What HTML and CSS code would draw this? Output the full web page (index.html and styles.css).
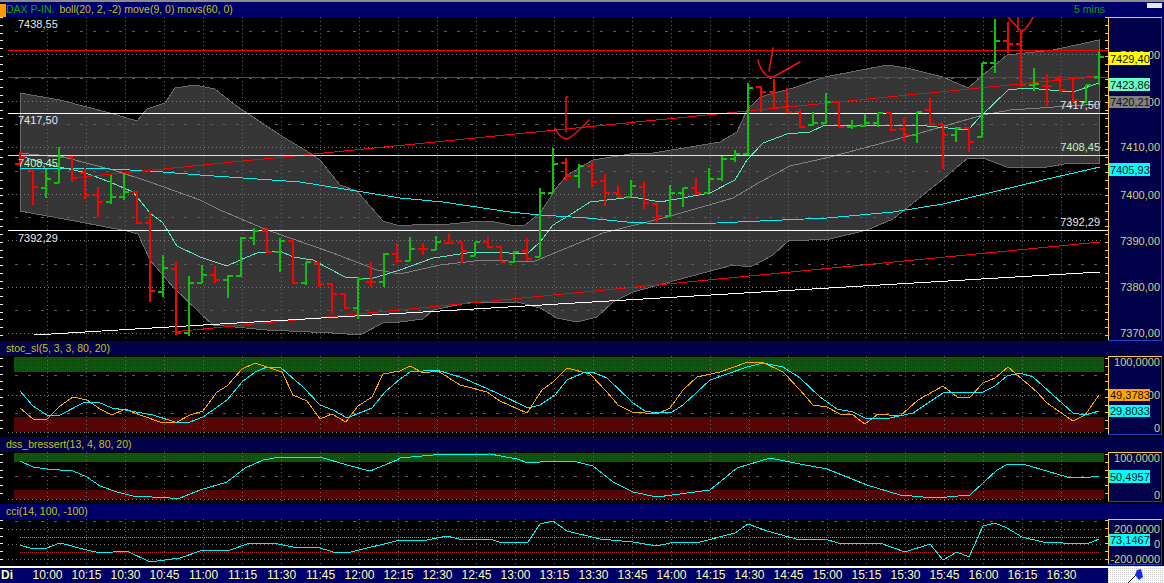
FILE: index.html
```html
<!DOCTYPE html>
<html lang="de">
<head>
<meta charset="utf-8">
<title>DAX P-IN. 5 mins</title>
<link rel="stylesheet" href="styles.css">
</head>
<body>
<svg class="defs" width="0" height="0" aria-hidden="true">
  <defs>
    <pattern id="navy" width="2" height="2" patternUnits="userSpaceOnUse"><rect width="2" height="2" fill="#00006c"/><rect width="1" height="1" fill="#000048"/><rect x="1" y="1" width="1" height="1" fill="#000048"/></pattern>
    <pattern id="green" width="2" height="2" patternUnits="userSpaceOnUse"><rect width="2" height="2" fill="#075e07"/><rect width="1" height="1" fill="#044804"/></pattern>
    <pattern id="red" width="2" height="2" patternUnits="userSpaceOnUse"><rect width="2" height="2" fill="#700000"/><rect width="1" height="1" fill="#500000"/><rect x="1" y="1" width="1" height="1" fill="#500000"/></pattern>
    <pattern id="gray" width="4" height="4" patternUnits="userSpaceOnUse"><rect width="4" height="4" fill="#383638"/><rect width="1" height="1" fill="#323832"/><rect x="2" y="1" width="1" height="1" fill="#383030"/><rect x="1" y="3" width="1" height="1" fill="#303030"/><rect x="3" y="2" width="1" height="1" fill="#303038"/></pattern>
    <pattern id="paper" width="2" height="2" patternUnits="userSpaceOnUse"><rect width="2" height="2" fill="#fff"/><rect width="1" height="1" fill="#ccc"/></pattern>
  </defs>
</svg>
<div class="app">
  <div class="topbar"></div>

  <header class="head">
    <span class="flag"></span><span class="sym">DAX P-IN.</span><span class="ind">boll(20, 2, -2) move(9, 0) movs(60, 0)</span>
    <span class="period">5 mins</span><span class="winbtn"></span>
  </header>
  <section class="row row-main">
    <svg class="plot" width="1108" height="324" viewBox="0 17 1108 324">
      <polygon fill="url(#gray)" class="bandedge" points="20,93 60,100 110,113 137,121 147,109 165,103 175,88 195,85 215,89 235,105 280,135 310,153 320,160 340,185 357,191 383,221 400,226 425,224 440,225 470,222 490,221 510,225 525,225 540,213 557,187 567,175 593,160 630,154 653,153 690,147 720,142 737,132 747,110 760,97 793,88 825,77 887,65 907,68 943,77 968,88 983,75 1007,55 1053,50 1099,40 1099,163 1070,163 1047,167 1007,167 983,158 968,158 943,179 893,219 867,230 830,239 788,241 773,255 760,262 750,267 733,265 677,280 633,292 613,302 597,317 577,322 557,318 540,308 517,302 467,303 433,310 423,319 400,322 383,323 360,335 333,333 267,330 213,325 200,313 173,287 150,260 138,234 127,231 80,222 20,211"/>
      <path class="grid-dot" d="M8 54H1104M8 101H1104M8 147H1104M8 194H1104M8 240H1104M8 287H1104M8 333H1104"/>
      <path class="grid-dash" d="M15 31H1104M15 78H1104M15 124H1104M15 171H1104M15 217H1104M15 264H1104M15 310H1104"/>
      <path class="grid-v" d="M47 17V341M86 17V341M125 17V341M164 17V341M203 17V341M242 17V341M281 17V341M320 17V341M359 17V341M398 17V341M437 17V341M476 17V341M515 17V341M554 17V341M593 17V341M632 17V341M671 17V341M710 17V341M749 17V341M788 17V341M827 17V341M866 17V341M905 17V341M944 17V341M983 17V341M1022 17V341M1061 17V341"/>
      <path class="ticks-l" d="M1.5 17V341"/>
      <path class="ticks-r" d="M1106.5 17V341"/>

      <polyline class="ln ln-gray" points="20,153 67,158 113,170 150,182 200,200 220,210 267,230 333,253 377,270 400,274 440,265 483,260 533,262 557,252 603,233 667,217 733,198 760,182 790,166 830,157 920,133 983,115 1010,110 1099,104"/>
      <polyline class="ln ln-cyan" points="20,168 50,168 110,169 150,171 200,175 300,182 400,198 443,202 510,212 540,215 587,218 627,222 667,224 717,223 760,221 827,218 893,212 943,204 993,192 1043,180 1100,167"/>
      <polyline class="ln ln-teal" points="20,156 50,165 83,172 110,182 133,192 150,213 163,223 177,246 200,257 227,266 240,260 257,253 280,251 293,257 313,260 345,277 370,279 400,270 433,258 467,253 490,252 527,254 540,242 553,225 573,213 590,202 633,197 660,202 710,193 735,180 747,160 763,143 787,134 810,132 825,125 893,125 927,126 968,130 980,117 1008,90 1027,88 1073,92 1099,83"/>

      <path class="ln-red" d="M72 178L1100 76M172 332L1100 242"/>
      <path class="ln-white" d="M34 335L1100 272"/>
      <path class="ln-red" d="M8 50.5H1108M8 77.5H1108"/>
      <path class="ln-white" d="M8 113.5H1108M8 230.5H1108"/>
      <path class="ln-pale" d="M8 155.5H1108"/>

      <path class="bar bar-red" d="M20 152V165M15 164H20M20 157H25M33 170V205M28 170H33M33 187H38M72 156V182M67 157H72M72 178H77M85 168V199M80 173H85M85 195H90M98 187V217M93 195H98M98 202H103M137 191V224M132 192H137M137 223H142M150 212V302M145 223H150M150 291H155M176 262V335M171 269H176M176 333H181M215 266V283M210 275H215M215 280H220M267 228V253M262 231H267M267 252H272M293 240V284M288 241H293M293 283H298M319 263V287M314 263H319M319 284H324M332 283V313M327 284H332M332 294H337M345 293V309M340 294H345M345 308H350M371 262V287M366 282H371M371 282H376M397 243V263M392 254H397M397 261H402M423 243V255M418 249H423M423 249H428M449 233V244M444 243H449M449 243H454M462 242V263M457 242H462M462 251H467M488 237V248M483 242H488M488 247H493M501 247V262M496 247H501M501 262H506M527 238V261M522 251H527M527 259H532M566 158V181M561 163H566M566 176H571M592 162V187M587 166H592M592 182H597M605 174V206M600 181H605M605 193H610M618 186V198M613 193H618M618 197H623M644 182V209M639 187H644M644 203H649M657 203V222M652 204H657M657 216H662M696 178V195M691 188H696M696 193H701M761 86V112M756 87H761M761 92H766M774 79V109M769 92H774M774 108H779M787 88V113M782 107H787M787 112H792M800 109V128M795 112H800M800 127H805M839 102V127M834 102H839M839 127H844M891 113V131M886 113H891M891 130H896M904 118V141M899 129H904M904 135H909M930 98V126M925 110H930M930 124H935M943 124V169M938 124H943M943 135H948M969 128V152M964 128H969M969 142H974M1008 22V53M1003 41H1008M1008 44H1013M1021 30V87M1016 44H1021M1021 85H1026M1047 74V106M1042 86H1047M1047 86H1052M1060 75V92M1055 79H1060M1060 90H1065M1073 78V102M1068 78H1073M1073 100H1078M1086 77H1097"/>
      <path class="bar bar-green" d="M46 169V198M41 188H46M46 179H51M59 147V183M54 183H59M59 157H64M111 175V204M106 202H111M111 197H116M124 173V200M119 197H124M124 192H129M163 255V297M158 292H163M163 268H168M189 276V336M184 333H189M189 283H194M202 265V283M197 283H202M202 275H207M228 275V298M223 280H228M228 276H233M241 237V277M236 276H241M241 238H246M254 228V245M249 238H254M254 231H259M280 238V272M275 252H280M280 241H285M306 262V285M301 283H306M306 262H311M358 279V319M353 308H358M358 279H363M384 253V287M379 282H384M384 254H389M410 237V261M405 261H410M410 249H415M436 236V250M431 250H436M436 242H441M475 242V256M470 256H475M475 242H480M514 251V263M509 262H514M514 252H519M540 188V257M535 257H540M540 193H545M553 148V193M548 193H553M553 164H558M579 164V188M574 176H579M579 166H584M631 180V197M626 197H631M631 186H636M670 185V217M665 216H670M670 193H675M683 188V207M678 193H683M683 188H688M709 168V193M704 193H709M709 179H714M722 156V181M717 179H722M722 159H727M735 150V162M730 159H735M735 154H740M748 83V155M743 154H748M748 88H753M813 112V126M808 125H813M813 123H818M826 93V124M821 123H826M826 102H831M852 120V129M847 127H852M852 126H857M865 114V127M860 126H865M865 123H870M878 113V127M873 123H878M878 113H883M917 112V143M912 135H917M917 112H922M956 127V142M951 135H956M956 128H961M982 63V137M977 137H982M982 63H987M995 19V73M990 63H995M995 41H1000M1034 68V91M1029 85H1034M1034 84H1039M1086 85V103M1081 102H1086M1086 85H1091M1099 51V85M1094 77H1099M1099 57H1104"/>

      <path class="pen" d="M568 97L566 97L566 132M555 128Q559 138 567 139Q573 137 589 120M773 48L769 71M758 60Q762 77 773 77L800 62M1018 3V30M1000 10Q1006 12 1008 17L1022 32Q1030 25 1035 13"/>

      <text class="lbl" x="18" y="28">7438,55</text>
      <text class="lbl" x="18" y="124">7417,50</text>
      <text class="lbl lbl-pale" x="18" y="167">7408,45</text>
      <text class="lbl" x="18" y="242">7392,29</text>
      <text class="lbl" x="1100" y="109" text-anchor="end">7417,50</text>
      <text class="lbl lbl-pale" x="1100" y="151" text-anchor="end">7408,45</text>
      <text class="lbl" x="1100" y="226" text-anchor="end">7392,29</text>
    </svg>
    <svg class="axis" width="56" height="324" viewBox="1108 17 56 324">
      <rect x="1108" y="17" width="56" height="323" fill="url(#navy)"/>
      <path class="ax-blue" d="M1161.5 17V340H1108"/>
      <path class="ax-gold" d="M1108 17.5H1162M1108.5 17V340"/>
      <text class="ax" x="1160" y="59" text-anchor="end">7430,00</text>
      <text class="ax" x="1160" y="106" text-anchor="end">7420,00</text>
      <text class="ax" x="1160" y="151" text-anchor="end">7410,00</text>
      <text class="ax" x="1160" y="199" text-anchor="end">7400,00</text>
      <text class="ax" x="1160" y="245" text-anchor="end">7390,00</text>
      <text class="ax" x="1160" y="291" text-anchor="end">7380,00</text>
      <text class="ax" x="1160" y="337" text-anchor="end">7370,00</text>
      <rect x="1109" y="52" width="41" height="13" class="b-yellow"/><text class="val" x="1110" y="63">7429,40</text>
      <rect x="1109" y="78" width="41" height="13" class="b-teal"/><text class="val" x="1110" y="89">7423,86</text>
      <rect x="1109" y="96" width="41" height="12" class="b-gray"/><text class="val" x="1110" y="106">7420,21</text>
      <rect x="1109" y="163" width="41" height="13" class="b-cyan"/><text class="val" x="1110" y="174">7405,93</text>
    </svg>
  </section>

  <header class="head"><span class="ind sub">stoc_sl(5, 3, 3, 80, 20)</span></header>
  <section class="row row-stoc">
    <svg class="plot" width="1108" height="81" viewBox="0 356 1108 81">
      <rect x="14" y="357" width="1090" height="15" fill="url(#green)"/>
      <rect x="14" y="417" width="1090" height="15" fill="url(#red)"/>
      <path class="grid-dot" d="M8 395H1104M8 432H1104"/>
      <path class="grid-dash" d="M15 375H1104M15 413H1104"/>
      <path class="grid-v" d="M47 356V437M86 356V437M125 356V437M164 356V437M203 356V437M242 356V437M281 356V437M320 356V437M359 356V437M398 356V437M437 356V437M476 356V437M515 356V437M554 356V437M593 356V437M632 356V437M671 356V437M710 356V437M749 356V437M788 356V437M827 356V437M866 356V437M905 356V437M944 356V437M983 356V437M1022 356V437M1061 356V437"/>
      <path class="ticks-l" d="M1.5 358V433"/>
      <path class="ticks-r" d="M1106.5 358V433"/>
      <polyline class="ln ln-orange" points="20,408 33,419 47,419 60,406 73,397 87,400 100,409 112,415 125,409 140,415 163,423 177,422 190,415 203,411 217,392 227,386 242,369 255,363 267,367 282,372 293,395 307,401 320,419 332,414 346,422 358,406 372,397 383,374 400,371 410,366 423,373 438,371 460,385 487,392 500,401 527,413 542,390 553,382 567,368 590,374 607,392 618,405 632,412 657,414 670,408 683,390 697,377 720,372 748,362 762,362 783,372 800,390 813,405 827,407 840,414 853,415 865,424 878,414 900,416 918,400 943,386 957,397 970,397 983,383 995,378 1008,367 1037,392 1047,403 1073,421 1085,415 1099,395"/>
      <polyline class="ln ln-cyan" points="20,391 33,406 47,415 60,415 85,402 98,402 112,408 125,410 153,415 175,422 190,422 203,417 227,400 242,382 255,372 267,367 280,367 303,387 320,405 333,410 347,418 362,412 372,408 385,392 400,379 410,372 437,370 463,378 497,393 528,408 540,405 555,395 567,380 583,373 592,372 607,378 633,403 645,411 657,413 672,412 683,405 710,380 747,367 763,363 783,367 800,378 820,397 837,409 853,412 865,418 890,418 913,413 943,393 955,392 983,392 995,386 1007,376 1020,373 1033,377 1053,395 1073,413 1085,415 1099,411"/>
    </svg>
    <svg class="axis" width="56" height="81" viewBox="1108 356 56 81">
      <rect x="1108" y="356" width="54" height="78" fill="url(#navy)"/>
      <path class="ax-blue" d="M1161.5 356V434H1108"/>
      <path class="ax-gold" d="M1108 356.5H1162M1108.5 356V434"/>
      <text class="ax" x="1160" y="366" text-anchor="end">100,0000</text>
      <text class="ax" x="1160" y="399" text-anchor="end">50,0000</text>
      <text class="ax" x="1160" y="432" text-anchor="end">0</text>
      <rect x="1109" y="389" width="41" height="12" class="b-orange"/><text class="val" x="1110" y="399">49,3783</text>
      <rect x="1109" y="405" width="41" height="12" class="b-cyan"/><text class="val" x="1110" y="415">29,8033</text>
    </svg>
  </section>

  <header class="head"><span class="ind sub">dss_bressert(13, 4, 80, 20)</span></header>
  <section class="row row-dss">
    <svg class="plot" width="1108" height="52" viewBox="0 452 1108 52">
      <rect x="14" y="453" width="1090" height="9" fill="url(#green)"/>
      <rect x="14" y="490" width="1090" height="9" fill="url(#red)"/>
      <path class="grid-dot" d="M8 499H1104"/>
      <path class="grid-dash" d="M15 476H1104"/>
      <path class="grid-v" d="M47 452V504M86 452V504M125 452V504M164 452V504M203 452V504M242 452V504M281 452V504M320 452V504M359 452V504M398 452V504M437 452V504M476 452V504M515 452V504M554 452V504M593 452V504M632 452V504M671 452V504M710 452V504M749 452V504M788 452V504M827 452V504M866 452V504M905 452V504M944 452V504M983 452V504M1022 452V504M1061 452V504"/>
      <path class="ticks-l" d="M1.5 454V500"/>
      <path class="ticks-r" d="M1106.5 454V500"/>
      <polyline class="ln ln-cyan" points="20,461 33,467 47,469 73,471 87,477 100,486 117,492 133,496 170,498 180,498 200,490 227,482 245,468 263,460 280,457 320,457 347,465 370,471 397,460 400,458 433,455 490,454 517,459 528,463 553,461 577,462 593,466 613,482 633,492 657,497 710,490 737,468 770,458 800,464 827,469 867,485 900,495 923,497 947,497 970,495 997,470 1008,464 1023,464 1067,477 1083,478 1099,476"/>
    </svg>
    <svg class="axis" width="56" height="52" viewBox="1108 452 56 52">
      <rect x="1108" y="451" width="54" height="50" fill="url(#navy)"/>
      <path class="ax-blue" d="M1161.5 452V501H1108"/>
      <path class="ax-gold" d="M1108 452.5H1162M1108.5 452V501"/>
      <text class="ax" x="1160" y="462" text-anchor="end">100,0000</text>
      <text class="ax" x="1160" y="499" text-anchor="end">0</text>
      <rect x="1109" y="470" width="41" height="13" class="b-cyan"/><text class="val" x="1110" y="481">50,4957</text>
    </svg>
  </section>

  <header class="head"><span class="ind sub">cci(14, 100, -100)</span></header>
  <section class="row row-cci">
    <svg class="plot" width="1108" height="47" viewBox="0 519 1108 47">
      <path class="grid-dot" d="M8 529H1104M8 544H1104M8 559H1104"/>
      <path class="grid-dash" d="M15 521H1104"/>
      <path class="grid-v" d="M47 519V566M86 519V566M125 519V566M164 519V566M203 519V566M242 519V566M281 519V566M320 519V566M359 519V566M398 519V566M437 519V566M476 519V566M515 519V566M554 519V566M593 519V566M632 519V566M671 519V566M710 519V566M749 519V566M788 519V566M827 519V566M866 519V566M905 519V566M944 519V566M983 519V566M1022 519V566M1061 519V566"/>
      <path class="ticks-l" d="M1.5 520V564"/>
      <path class="ticks-r" d="M1106.5 520V564"/>
      <path class="lim-green" d="M20 537.5H1100"/>
      <path class="lim-red" d="M20 552.5H1100"/>
      <polyline class="ln ln-cyan" points="20,545 33,549 47,548 60,543 87,550 100,553 127,551 150,562 180,558 203,550 230,550 250,543 273,543 293,547 317,547 333,552 347,553 400,540 427,540 447,536 463,540 490,539 502,543 528,542 540,524 553,521 567,531 600,539 633,542 657,546 670,543 700,542 735,533 748,524 767,531 800,540 825,539 838,543 880,543 905,552 930,544 943,560 957,552 969,557 983,526 995,523 1007,528 1022,537 1043,542 1063,543 1087,544 1099,539"/>
    </svg>
    <svg class="axis" width="56" height="47" viewBox="1108 519 56 47">
      <rect x="1108" y="518" width="54" height="46" fill="url(#navy)"/>
      <path class="ax-blue" d="M1161.5 519V564.5H1108"/>
      <path class="ax-gold" d="M1108 519.5H1162M1108.5 519V564"/>
      <text class="ax" x="1160" y="533" text-anchor="end">200,0000</text>
      <text class="ax" x="1160" y="548" text-anchor="end">0</text>
      <text class="ax" x="1160" y="563" text-anchor="end">-200,0000</text>
      <rect x="1109" y="534" width="41" height="12" class="b-cyan"/><text class="val" x="1110" y="544">73,1467</text>
    </svg>
  </section>

  <footer class="foot">
    <div class="times">
      <span class="day">Di</span><span>10:00</span><span>10:15</span><span>10:30</span><span>10:45</span><span>11:00</span><span>11:15</span><span>11:30</span><span>11:45</span><span>12:00</span><span>12:15</span><span>12:30</span><span>12:45</span><span>13:00</span><span>13:15</span><span>13:30</span><span>13:45</span><span>14:00</span><span>14:15</span><span>14:30</span><span>14:45</span><span>15:00</span><span>15:15</span><span>15:30</span><span>15:45</span><span>16:00</span><span>16:15</span><span>16:30</span>
    </div>
    <svg class="corner" width="56" height="17" viewBox="1108 566 56 17">
      <rect x="1108" y="566" width="56" height="17" fill="url(#paper)"/>
      <path class="pin-stem" d="M1128 583L1137 574"/>
      <path class="pin-head" d="M1137 570L1141 569L1143 577L1139 580L1135 575Z"/>
    </svg>
  </footer>
</div>
</body>
</html>
```

FILE: styles.css
```css
html, body {
  margin: 0;
  padding: 0;
  background: #000;
}

.defs {
  display: block;
  height: 0;
}

.app {
  width: 1164px;
  height: 583px;
  display: flex;
  flex-direction: column;
  overflow: hidden;
  background: #000;
  font-family: "Liberation Sans", Arial, sans-serif;
}

.topbar {
  height: 2px;
  flex: none;
  background: #8c8c8c;
}

.head {
  position: relative;
  height: 15px;
  flex: none;
  display: flex;
  align-items: center;
  font-size: 10.5px;
  line-height: 15px;
  white-space: nowrap;
  background: repeating-conic-gradient(#000048 0 25%, #00006c 0 50%) 0 0 / 2px 2px;
}

.flag {
  width: 6px;
  height: 13px;
  align-self: flex-end;
  background: #f90;
}

.sym {
  color: #00b000;
  margin-right: 5px;
}

.ind {
  color: #c4c400;
}

.sub {
  margin-left: 6px;
}

.period {
  color: #00a800;
  margin-left: auto;
  margin-right: 42px;
}

.winbtn {
  width: 15px;
  height: 5px;
  flex: none;
  margin-right: 2px;
  align-self: flex-start;
  margin-top: 1px;
  background: #e8e8e8;
}

.row {
  display: flex;
  flex: none;
}

.row-main { height: 324px; }
.row-stoc { height: 81px; }
.row-dss { height: 52px; }
.row-cci { height: 47px; }

svg {
  display: block;
  flex: none;
}

.plot {
  overflow: visible;
}

.bandedge {
  stroke: #6a6a6a;
  stroke-width: 1;
  shape-rendering: crispEdges;
}

.grid-dot,
.grid-dash,
.grid-v {
  fill: none;
  stroke-width: 1;
  shape-rendering: crispEdges;
}

.grid-dot {
  stroke: #7a7a7a;
  stroke-dasharray: 1 3;
}

.grid-dash {
  stroke: #5c5c5c;
  stroke-dasharray: 3 10;
}

.grid-v {
  stroke: #666;
  stroke-dasharray: 1 3;
}

.ticks-l,
.ticks-r {
  fill: none;
  stroke-width: 3;
  stroke-dasharray: 1 6.75;
  shape-rendering: crispEdges;
}

.ticks-l { stroke: #eee; }
.ticks-r { stroke: #ffcc44; }

.ln,
.ln-red,
.ln-white,
.ln-pale,
.lim-green,
.lim-red {
  fill: none;
  stroke-width: 1;
  shape-rendering: crispEdges;
}

.ln-gray { stroke: #808080; }
.ln-cyan { stroke: #00f4f4; }
.ln-teal { stroke: #58e8bc; }
.ln-orange { stroke: #ffa500; }
.ln-red { stroke: #ff0000; }
.ln-white { stroke: #fff; }
.ln-pale { stroke: #b4ffb4; }

.lim-green {
  stroke: #33e033;
  stroke-dasharray: 1 1;
}

.lim-red {
  stroke: #c02020;
  stroke-dasharray: 1 1;
}

.bar {
  fill: none;
  stroke-width: 2;
  shape-rendering: crispEdges;
}

.bar-red { stroke: #ff0000; }
.bar-green { stroke: #10c010; }

.pen {
  fill: none;
  stroke: #ee1111;
  stroke-width: 1.5;
  stroke-linecap: round;
  stroke-linejoin: round;
}

.lbl {
  fill: #e4e8f0;
  font-size: 11px;
}

.lbl-pale {
  fill: #c4f0c4;
}

.ax {
  fill: #d0d080;
  font-size: 11px;
}

.val {
  fill: #101010;
  font-size: 11px;
}

.ax-blue,
.ax-gold {
  fill: none;
  stroke-width: 1;
  shape-rendering: crispEdges;
}

.ax-blue { stroke: #2040d0; }
.ax-gold { stroke: #ffcc44; }

.b-yellow { fill: #ffff00; }
.b-teal { fill: #66ffcc; }
.b-gray { fill: #808080; }
.b-cyan { fill: #00ffff; }
.b-orange { fill: #ffa500; }

.foot {
  height: 17px;
  flex: none;
  display: flex;
}

.times {
  width: 1108px;
  display: flex;
  border-top: 2px solid #fffde0;
  background: repeating-conic-gradient(#000048 0 25%, #00006c 0 50%) 0 0 / 2px 2px;
  color: #ffff9c;
  font-size: 12px;
  line-height: 15px;
  box-sizing: border-box;
}

.times span {
  width: 39px;
  text-align: center;
  flex: none;
}

.times .day {
  width: 28px;
  text-align: left;
  font-weight: bold;
  padding-left: 1px;
  box-sizing: border-box;
}

.pin-stem {
  fill: none;
  stroke: #111;
  stroke-width: 1;
}

.pin-head {
  fill: #1030e0;
}
```
